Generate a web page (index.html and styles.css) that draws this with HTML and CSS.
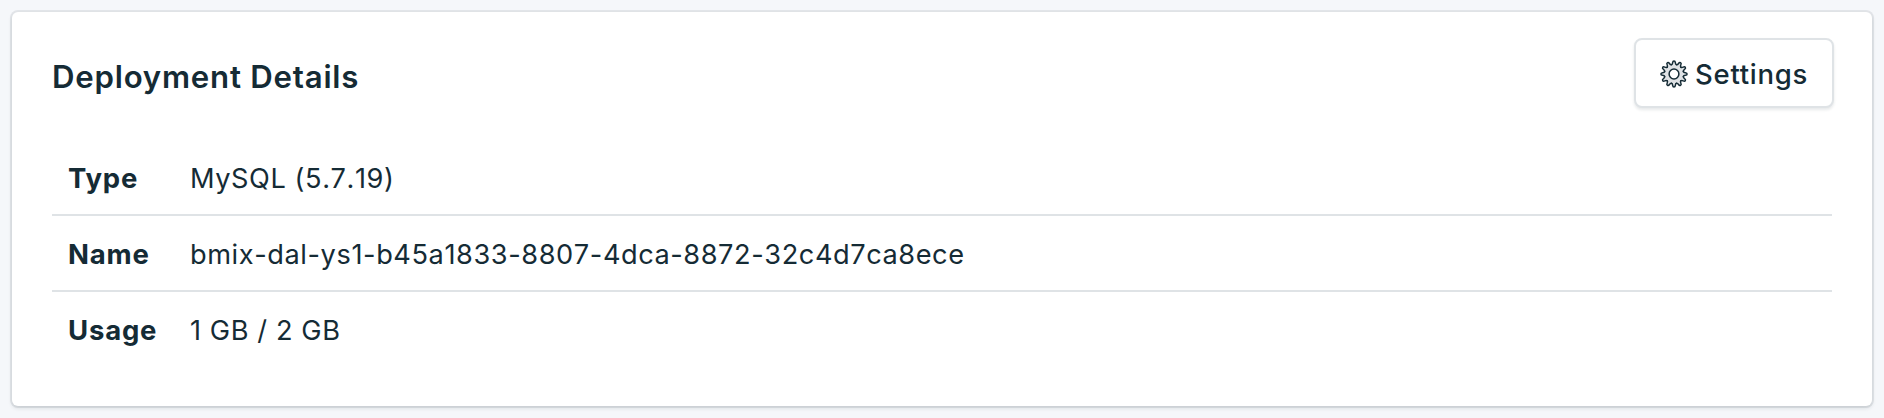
FILE: index.html
```html
<!DOCTYPE html>
<html lang="en">
<head>
<meta charset="utf-8">
<title>Deployment Details</title>
<link rel="stylesheet" href="styles.css">
</head>
<body>
<section class="card">
  <header class="card-header">
    <h2 class="title">Deployment Details</h2>
    <button class="button">
      <svg class="gear" viewBox="-14 -14 28 28">
        <defs><path id="tooth" d="M-2.5-9.35Q-1.5-9.6-1.35-11.4Q-1.2-13.1 0-13.1Q1.2-13.1 1.35-11.4Q1.5-9.6 2.5-9.35"/></defs>
        <circle class="gear-body" r="7.3"/>
        <g class="gear-teeth">
          <use href="#tooth"/>
          <use href="#tooth" transform="rotate(30)"/>
          <use href="#tooth" transform="rotate(60)"/>
          <use href="#tooth" transform="rotate(90)"/>
          <use href="#tooth" transform="rotate(120)"/>
          <use href="#tooth" transform="rotate(150)"/>
          <use href="#tooth" transform="rotate(180)"/>
          <use href="#tooth" transform="rotate(210)"/>
          <use href="#tooth" transform="rotate(240)"/>
          <use href="#tooth" transform="rotate(270)"/>
          <use href="#tooth" transform="rotate(300)"/>
          <use href="#tooth" transform="rotate(330)"/>
        </g>
        <circle class="gear-hub" r="4.9"/>
      </svg>
      <span class="button-label">Settings</span>
    </button>
  </header>
  <dl class="details">
    <div class="row"><dt class="label">Type</dt><dd class="value">MySQL (5.7.19)</dd></div>
    <div class="row"><dt class="label">Name</dt><dd class="value">bmix-dal-ys1-b45a1833-8807-4dca-8872-32c4d7ca8ece</dd></div>
    <div class="row"><dt class="label">Usage</dt><dd class="value">1 GB / 2 GB</dd></div>
  </dl>
</section>
</body>
</html>
```
FILE: styles.css
```css
* { box-sizing: border-box; }
body { margin: 0; height: 418px; padding: 12px; background: #f5f7fa; color: #152b35; font-family: Inter, sans-serif; }
.card { height: 394px; background: #fff; border-radius: 6px; padding: 26px 40px 0; box-shadow: 0 0 0 2px rgba(21,41,53,.08), 0 2px 4px rgba(21,41,53,.14); }
.card-header { display: flex; justify-content: space-between; height: 102px; }
.title { margin: 0; padding-top: 19px; font-size: 31.2px; line-height: 40px; font-weight: 600; letter-spacing: .77px; }
.button { width: 200px; height: 70px; margin-right: -2px; padding: 2px 0 0; display: flex; align-items: center; justify-content: center; gap: 7px; font: 500 27.5px Inter, sans-serif; letter-spacing: .7px; color: inherit; background: #fff; border: 2px solid #dfe3e6; border-radius: 8px; box-shadow: 0 2px 3px rgba(21,41,53,.1); }
.gear { width: 28px; height: 28px; }
.gear-body { fill: none; stroke: #dfe2e5; stroke-width: 5; }
.gear-teeth { fill: #dfe2e5; stroke: #152b35; stroke-width: 1.5; stroke-linecap: round; }
.gear-hub { fill: #fff; stroke: #152b35; stroke-width: 1.5; }
.details { margin: 0; }
.row { display: flex; height: 76px; align-items: center; padding: 2px 16px 0; border-bottom: 2px solid #dfe3e6; }
.row:last-child { border-bottom-color: transparent; }
.label { width: 122px; font-size: 27.5px; font-weight: 700; letter-spacing: .8px; }
.value { margin: 0; font-size: 27.2px; letter-spacing: .58px; font-kerning: none; }
```
